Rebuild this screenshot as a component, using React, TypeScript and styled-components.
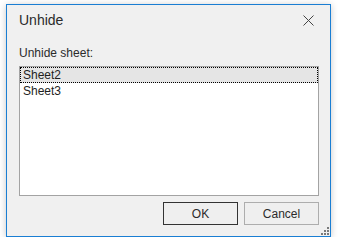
import React from "react";
import styled, { createGlobalStyle } from "styled-components";

const GlobalStyle = createGlobalStyle`
  html, body {
    margin: 0;
    padding: 0;
    background: #ffffff;
    font-family: "Liberation Sans", Arial, sans-serif;
  }
`;

const Page = styled.div`
  padding: 4px 0 0 6px;
`;

const Window = styled.div`
  position: relative;
  box-sizing: border-box;
  width: 325px;
  height: 233px;
  border: 1px solid #1a7ed3;
  background: #f0f0f0;
  box-shadow: 0 1px 7px rgba(0, 0, 0, 0.22);
  display: flex;
  flex-direction: column;
`;

const TitleBar = styled.div`
  height: 30px;
  display: flex;
  align-items: center;
  justify-content: space-between;
  padding: 0 16px 0 12px;
`;

const Title = styled.div`
  font-size: 14px;
  color: #2b2b2b;
`;

const CloseIcon = styled.svg`
  display: block;
  width: 11px;
  height: 11px;
`;

const Body = styled.div`
  flex: 1;
  display: flex;
  flex-direction: column;
  padding: 0 11px 0 12px;
`;

const Label = styled.div`
  margin-top: 11px;
  font-size: 12px;
  line-height: 15px;
  color: #2b2b2b;
`;

const ListBox = styled.div`
  margin-top: 5px;
  box-sizing: border-box;
  height: 130px;
  border: 1px solid #a3a3a3;
  background: #ffffff;
`;

const Item = styled.div<{ $selected?: boolean }>`
  box-sizing: border-box;
  height: 16px;
  line-height: 14px;
  padding-left: 2px;
  font-size: 12px;
  color: #1e1e1e;
  background: ${(p) => (p.$selected ? "#e5e5e5" : "transparent")};
  border: 1px ${(p) => (p.$selected ? "dotted #000" : "solid transparent")};
`;

const Footer = styled.div`
  display: flex;
  justify-content: flex-end;
  gap: 6px;
  margin-top: 6px;
`;

const Button = styled.button<{ $default?: boolean }>`
  box-sizing: border-box;
  width: 75px;
  height: 23px;
  margin: 0;
  padding: 0;
  border: 1px solid ${(p) => (p.$default ? "#333333" : "#adadad")};
  background: #efefef;
  font-family: "Liberation Sans", Arial, sans-serif;
  font-size: 12px;
  color: #2b2b2b;
`;

const Grip = styled.svg`
  position: absolute;
  right: 1px;
  bottom: 1px;
  width: 8px;
  height: 8px;
`;

export default function App() {
  return (
    <>
      <GlobalStyle />
      <Page>
        <Window>
          <TitleBar>
            <Title>Unhide</Title>
            <CloseIcon viewBox="0 0 11 11">
              <path d="M0.5 0.5 L10.5 10.5 M10.5 0.5 L0.5 10.5" stroke="#444" strokeWidth="1" fill="none" />
            </CloseIcon>
          </TitleBar>
          <Body>
            <Label>Unhide sheet:</Label>
            <ListBox>
              <Item $selected>Sheet2</Item>
              <Item>Sheet3</Item>
            </ListBox>
            <Footer>
              <Button $default>OK</Button>
              <Button>Cancel</Button>
            </Footer>
          </Body>
          <Grip viewBox="0 0 8 8">
            <g fill="#7a7a7a">
              <rect x="6" y="0" width="2" height="2" />
              <rect x="3" y="3" width="2" height="2" />
              <rect x="6" y="3" width="2" height="2" />
              <rect x="0" y="6" width="2" height="2" />
              <rect x="3" y="6" width="2" height="2" />
              <rect x="6" y="6" width="2" height="2" />
            </g>
          </Grip>
        </Window>
      </Page>
    </>
  );
}
